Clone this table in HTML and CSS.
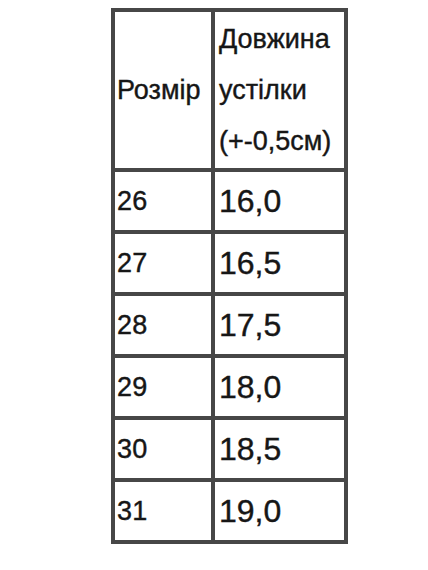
FILE: index.html
```html
<!DOCTYPE html>
<html>
<head>
<meta charset="utf-8">
<link rel="stylesheet" href="styles.css">
</head>
<body>
<div class="wrap">
<table class="sizes">
<tr class="head">
<td class="c1">Розмір</td>
<td class="c2">Довжина<br>устілки<br>(+-0,5см)</td>
</tr>
<tr><td class="c1">26</td><td class="c2 big">16,0</td></tr>
<tr><td class="c1">27</td><td class="c2 big">16,5</td></tr>
<tr><td class="c1">28</td><td class="c2 big">17,5</td></tr>
<tr><td class="c1">29</td><td class="c2 big">18,0</td></tr>
<tr><td class="c1">30</td><td class="c2 big">18,5</td></tr>
<tr><td class="c1">31</td><td class="c2 big">19,0</td></tr>
</table>
</div>
</body>
</html>
```
FILE: styles.css
```css
html, body {
  margin: 0;
  padding: 0;
  background: #fff;
}
.wrap {
  padding: 8px 0 0 111px;
}
.sizes {
  border-collapse: collapse;
  font-family: "Liberation Sans", Arial, sans-serif;
  color: #161616;
  -webkit-text-stroke: 0.4px #161616;
}
.sizes td {
  border: 4px solid #474747;
  padding: 0;
  vertical-align: middle;
  height: 58px;
  font-size: 27px;
  line-height: 30px;
  letter-spacing: 0.3px;
}
.sizes .c1 {
  width: 94px;
  padding-left: 2px;
}
.sizes .c2 {
  width: 125px;
  padding-left: 4px;
}
.sizes .head td {
  height: 156px;
  line-height: 51px;
  letter-spacing: 0;
}
.sizes .big {
  font-size: 32px;
  letter-spacing: 0;
}
```
